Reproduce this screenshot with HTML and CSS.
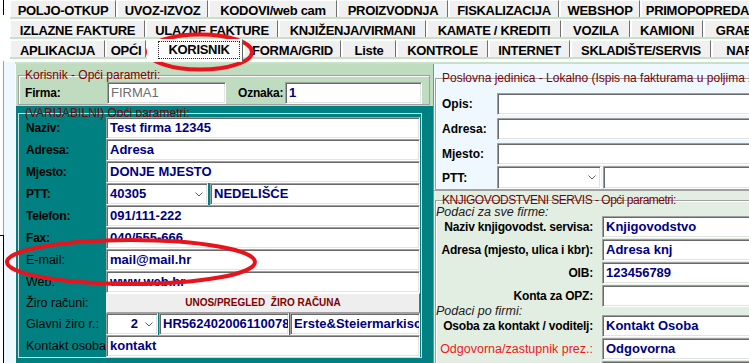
FILE: index.html
```html
<!DOCTYPE html>
<html lang="hr">

<head>
  <meta charset="UTF-8">
  <meta name="viewport" content="width=device-width, initial-scale=1.0">
  <title>Korisnik - Opći parametri</title>
  <link rel="stylesheet" href="styles.css">
</head>

<body>
  <div class="app">
    <nav class="tabs">
      <div class="tab-row row-1">
        <div class="tab">POLJO-OTKUP</div>
        <div class="tab">UVOZ-IZVOZ</div>
        <div class="tab">KODOVI/web cam</div>
        <div class="tab">PROIZVODNJA</div>
        <div class="tab">FISKALIZACIJA</div>
        <div class="tab">WEBSHOP</div>
        <div class="tab">PRIMOPOPREDAJA</div>
      </div>
      <div class="tab-row row-2">
        <div class="tab">IZLAZNE FAKTURE</div>
        <div class="tab">ULAZNE FAKTURE</div>
        <div class="tab">KNJIŽENJA/VIRMANI</div>
        <div class="tab">KAMATE / KREDITI</div>
        <div class="tab">VOZILA</div>
        <div class="tab">KAMIONI</div>
        <div class="tab">GRAĐEVINA</div>
      </div>
      <div class="tab-row row-3">
        <div class="tab">APLIKACIJA</div>
        <div class="tab">OPĆI</div>
        <div class="tab active"><span class="focus">KORISNIK</span></div>
        <div class="tab">FORMA/GRID</div>
        <div class="tab">Liste</div>
        <div class="tab">KONTROLE</div>
        <div class="tab">INTERNET</div>
        <div class="tab">SKLADIŠTE/SERVIS</div>
        <div class="tab">NARUDŽBE</div>
      </div>
    </nav>

    <main class="page">
      <div class="columns">
        <section class="left">
          <div class="firma-box">
            <div class="group">
              <div class="caption">Korisnik - Opći parametri:</div>
              <div class="row firma-row">
                <span class="lbl b">Firma:</span>
                <div class="tb firma disabled">FIRMA1</div>
                <span class="lbl b oznaka">Oznaka:</span>
                <div class="tb oznaka-tb">1</div>
              </div>
            </div>
          </div>

          <div class="var-box">
            <div class="group dark">
              <div class="caption">(VARIJABILNI) Opći parametri:</div>
              <div class="row"><span class="lbl b">Naziv:</span><div class="tb wide">Test firma 12345</div></div>
              <div class="row"><span class="lbl b">Adresa:</span><div class="tb wide">Adresa</div></div>
              <div class="row"><span class="lbl b">Mjesto:</span><div class="tb wide">DONJE MJESTO</div></div>
              <div class="row">
                <span class="lbl b">PTT:</span>
                <div class="tb combo ptt"><span>40305</span><svg class="chev" width="8" height="5" viewBox="0 0 8 5"><path d="M0.5 0.5L4 4L7.5 0.5" /></svg></div>
                <div class="tb mjesto">NEDELIŠĆE</div>
              </div>
              <div class="row"><span class="lbl b">Telefon:</span><div class="tb wide">091/111-222</div></div>
              <div class="row"><span class="lbl b">Fax:</span><div class="tb wide">040/555-666</div></div>
              <div class="row"><span class="lbl">E-mail:</span><div class="tb wide">mail@mail.hr</div></div>
              <div class="row"><span class="lbl">Web:</span><div class="tb wide">www.web.hr</div></div>
              <div class="row ziro"><span class="lbl">Žiro računi:</span><div class="ziro-btn">UNOS/PREGLED  ŽIRO RAČUNA</div></div>
              <div class="row">
                <span class="lbl">Glavni žiro r.:</span>
                <div class="tb combo num"><span>2</span><svg class="chev" width="8" height="5" viewBox="0 0 8 5"><path d="M0.5 0.5L4 4L7.5 0.5" /></svg></div>
                <div class="tb half">HR5624020061100784</div>
                <div class="tb half">Erste&amp;Steiermarkische</div>
              </div>
              <div class="row"><span class="lbl">Kontakt osoba</span><div class="tb wide">kontakt</div></div>
            </div>
          </div>
        </section>

        <section class="right">
          <div class="pj">
            <div class="group">
              <div class="caption">Poslovna jedinica - Lokalno (Ispis na fakturama u poljima za poslovnu jedinicu)</div>
              <div class="row first"><span class="lbl">Opis:</span><div class="tb"></div></div>
              <div class="row"><span class="lbl">Adresa:</span><div class="tb"></div></div>
              <div class="row"><span class="lbl">Mjesto:</span><div class="tb"></div></div>
              <div class="row ptt-row">
                <span class="lbl">PTT:</span>
                <div class="tb combo ptt"><span></span><svg class="chev" width="8" height="5" viewBox="0 0 8 5"><path d="M0.5 0.5L4 4L7.5 0.5" /></svg></div>
                <div class="tb"></div>
              </div>
            </div>
          </div>

          <div class="knj">
            <div class="group">
              <div class="caption caps">KNJIGOVODSTVENI SERVIS - Opći parametri:</div>
              <div class="note first">Podaci za sve firme:</div>
              <div class="row after-note"><span class="lbl">Naziv knjigovodst. servisa:</span><div class="tb">Knjigovodstvo</div></div>
              <div class="row"><span class="lbl">Adresa (mjesto, ulica i kbr):</span><div class="tb">Adresa knj</div></div>
              <div class="row"><span class="lbl">OIB:</span><div class="tb">123456789</div></div>
              <div class="row"><span class="lbl">Konta za OPZ:</span><div class="tb"></div></div>
              <div class="note">Podaci po firmi:</div>
              <div class="row after-note"><span class="lbl">Osoba za kontakt / voditelj:</span><div class="tb">Kontakt Osoba</div></div>
              <div class="row"><span class="lbl req">Odgovorna/zastupnik prez.:</span><div class="tb">Odgovorna</div></div>
              <div class="row"><span class="lbl"></span><div class="tb"></div></div>
            </div>
          </div>
        </section>
      </div>
    </main>
  </div>

  <div class="edge edge-top"></div>
  <div class="edge edge-bottom"></div>

  <svg class="marks" width="749" height="363" viewBox="0 0 749 363">
    <ellipse cx="200" cy="52" rx="52" ry="17.5" />
    <ellipse cx="131" cy="262" rx="124" ry="22" />
  </svg>
</body>

</html>
```

FILE: styles.css
```css
* {
  box-sizing: border-box;
}

body {
  margin: 0;
  width: 749px;
  height: 363px;
  overflow: hidden;
  position: relative;
  background: #fff;
  font-family: "Liberation Sans", Arial, sans-serif;
  color: #000;
}

.app {
  width: 1100px;
}

/* tab strip */

.tabs {
  padding-left: 10px;
}

.tab-row {
  display: grid;
  height: 19px;
  margin-bottom: 1px;
  border-bottom: 2px solid #c8e0c8;
}

.row-1 {
  grid-template-columns: 107px 92px 129px 111px 111px 81px 130px;
}

.row-2 {
  grid-template-columns: 136px 133px 148px 135px 69px 73px 100px;
}

.row-3 {
  grid-template-columns: 96px 41px 97px 98px 55px 92px 82px 141px 100px;
}

.tab {
  height: 17px;
  margin-right: 1px;
  padding-top: 4px;
  line-height: 12px;
  background: #f0f0f0;
  border-top: 1px solid #fff;
  border-left: 1px solid #fff;
  border-right: 1px solid #707070;
  font-size: 13px;
  font-weight: bold;
  letter-spacing: -0.3px;
  text-align: center;
  white-space: nowrap;
}

.tab.active {
  position: relative;
  z-index: 1;
  height: 23px;
  margin-top: -1px;
  padding: 1px 0 0 8px;
  display: flex;
  justify-content: center;
  align-items: flex-start;
  background: #fcfcfc;
  border-right-color: #606060;
}

.tab.active .focus {
  border: 1px dotted #222;
  line-height: 16px;
  padding: 0 9px;
}

/* tab page */

.page {
  margin-left: 3px;
  height: 303px;
  padding-left: 11px;
  border-left: 1px solid #a0a0a0;
  border-top: 2px solid #fff;
  background: #f0f8ff;
}

.columns {
  display: flex;
  height: 301px;
  border-top: 2px solid #c8e0c8;
}

.left {
  flex: none;
  width: 419px;
  display: flex;
  flex-direction: column;
  border-left: 1px solid #fff;
  border-right: 1px solid #8a8a8a;
}

.right {
  flex: none;
  width: 330px;
  display: flex;
  flex-direction: column;
}

.group {
  border: 1px solid #a0a0a0;
  box-shadow: inset 1px 1px 0 #fff;
}

.group.dark {
  border-color: #d8d8d8;
  box-shadow: none;
}

.caption {
  margin: -7px 0 -2px 6px;
  line-height: 12px;
  font-size: 12px;
  color: #800000;
  white-space: nowrap;
}

.caption.caps {
  letter-spacing: -0.5px;
}

.row {
  display: flex;
  align-items: center;
  height: 22px;
}

.lbl {
  flex: none;
  font-size: 12.5px;
  white-space: nowrap;
}

.lbl.b {
  font-size: 12px;
  font-weight: bold;
  letter-spacing: -0.2px;
}

.tb {
  height: 22px;
  padding: 0 3px;
  background: #fff;
  border: 1px solid;
  border-color: #a0a0a0 #fff #fff #a0a0a0;
  box-shadow: inset 1px 1px 0 #696969, inset -1px -1px 0 #e3e3e3;
  line-height: 20px;
  font-size: 13px;
  font-weight: bold;
  color: #000080;
  white-space: nowrap;
  overflow: hidden;
}

.tb.disabled {
  font-weight: normal;
  color: #6d6d6d;
}

.combo {
  display: flex;
  align-items: center;
  justify-content: space-between;
  padding-right: 4px;
}

.combo.num {
  justify-content: flex-end;
  gap: 7px;
}

.chev {
  flex: none;
}

.chev path {
  fill: none;
  stroke: #5a5a5a;
  stroke-width: 1;
}

/* korisnik box */

.firma-box {
  flex: none;
  height: 42px;
  padding-top: 11px;
  background: #c0dcc0;
}

.firma-box .group {
  margin: 0 3px 0 2px;
}

.firma-row {
  margin-top: 3px;
  padding-left: 6px;
}

.firma-row .lbl {
  width: 82px;
}

.firma-row .oznaka {
  width: 47px;
  margin-left: 12px;
}

.tb.firma {
  width: 119px;
}

.tb.oznaka-tb {
  width: 137px;
}

/* varijabilni box */

.var-box {
  flex: 1;
  padding-top: 7px;
  background: #008080;
}

.var-box .group {
  margin: 0 11px 0 2px;
}

.var-box .row {
  padding-left: 7px;
}

.var-box .lbl {
  width: 80px;
}

.var-box .tb.wide {
  width: 314px;
}

.var-box .combo.ptt {
  width: 102px;
}

.var-box .tb.mjesto {
  width: 210px;
  margin-left: 2px;
}

.var-box .combo.num {
  width: 52px;
}

.var-box .tb.half {
  width: 130px;
  margin-left: 1px;
}

.var-box .row.ziro {
  height: 20px;
}

.ziro-btn {
  width: 314px;
  height: 20px;
  background: #eeeeee;
  border-top: 1px solid #fff;
  border-left: 1px solid #fff;
  border-right: 1px solid #696969;
  border-bottom: 1px solid #a0a0a0;
  line-height: 18px;
  text-align: center;
  font-size: 10px;
  font-weight: bold;
  color: #800000;
  white-space: pre;
}

/* poslovna jedinica */

.pj {
  flex: none;
  height: 126px;
  padding-top: 14px;
  background: #f0f8ff;
  overflow: hidden;
}

.pj .group {
  margin-left: 1px;
}

.pj .row {
  padding-left: 6px;
  margin-top: 3px;
}

.pj .row.first {
  margin-top: 11px;
}

.pj .row.ptt-row {
  margin-top: 1px;
  height: 23px;
}

.pj .lbl {
  width: 55px;
  font-size: 12px;
  font-weight: bold;
}

.pj .tb {
  flex: 1;
}

.pj .combo.ptt {
  flex: none;
  width: 104px;
  height: 23px;
}

.pj .combo.ptt + .tb {
  height: 23px;
  margin-left: 2px;
}

/* knjigovodstveni servis */

.knj {
  flex: 1;
  padding-top: 9px;
  border-top: 1px solid #a0a0a0;
  background: #e2eee2;
}

.knj .group {
  margin-left: 1px;
}

.knj .note {
  margin-top: -1px;
  line-height: 11px;
  font-size: 12.5px;
  font-style: italic;
  color: #202020;
}

.knj .note.first {
  margin-top: 3px;
}

.knj .row {
  margin-top: 1px;
}

.knj .row.after-note {
  margin-top: -2px;
}

.knj .lbl {
  width: 157px;
  margin-right: 9px;
  text-align: right;
  font-size: 12px;
  font-weight: bold;
  letter-spacing: -0.2px;
}

.knj .lbl.req {
  font-size: 12.5px;
  font-weight: normal;
  letter-spacing: 0;
  color: #f01818;
}

.knj .tb {
  flex: 1;
}

/* window edges and red marks drawn over the screenshot */

.edge {
  position: absolute;
  border: 0 solid #000;
}

.edge-top {
  left: 3px;
  top: 0;
  height: 15px;
  border-left-width: 1px;
}

.edge-bottom {
  left: 0;
  top: 235px;
  width: 4px;
  height: 128px;
  border-top-width: 1px;
  border-right-width: 1px;
}

.marks {
  position: absolute;
  left: 0;
  top: 0;
  pointer-events: none;
}

.marks ellipse {
  fill: none;
  stroke: #e8141c;
  stroke-width: 4;
}
```
